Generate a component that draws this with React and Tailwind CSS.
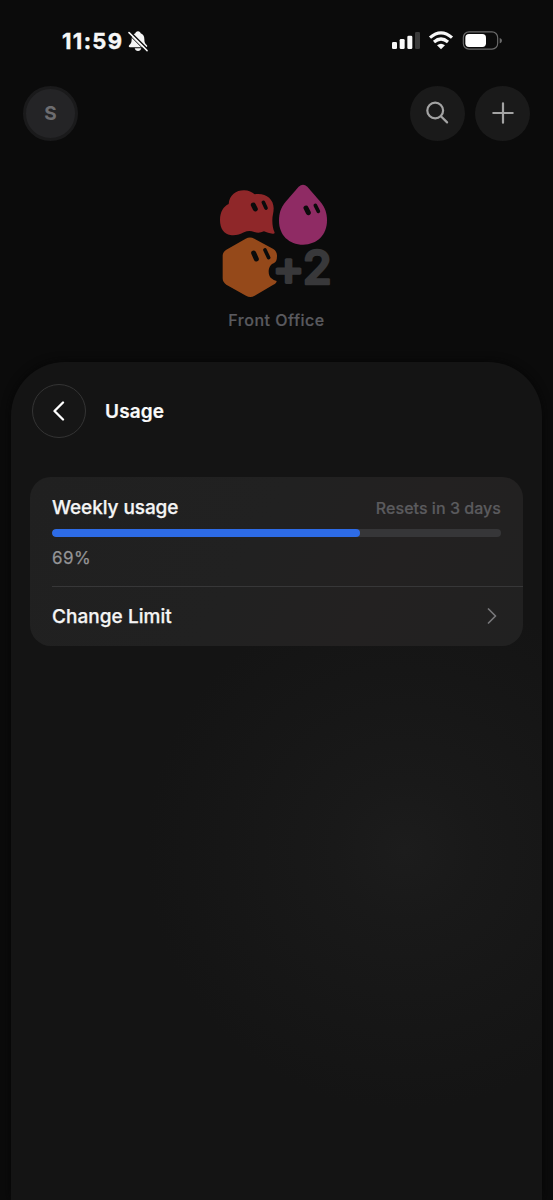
import React from "react";

function BellSlash() {
  return (
    <svg className="h-[22px] w-[22px]" viewBox="0 0 66 66" fill="none">
      <path d="M33 4c-5 0-7 3-8 6-8 3-11 9-11 17 0 10-2 14-7 18-3 3-2 7 2 7h48c4 0 5-4 2-7-5-4-7-8-7-18 0-8-3-14-11-17-1-3-3-6-8-6Z" fill="#f5f5f5" />
      <path d="M23 55h20c-1 5-5 8-10 8s-9-3-10-8Z" fill="#f5f5f5" />
      <path d="M9 5 63 59" stroke="#0b0b0b" strokeWidth="5" />
      <path d="M6 8 60 62" stroke="#f5f5f5" strokeWidth="5" strokeLinecap="round" />
      <path d="M3 11 57 65" stroke="#0b0b0b" strokeWidth="3" />
    </svg>
  );
}

function StatusBar() {
  return (
    <div className="flex h-[82px] items-start justify-between pl-[62px] pr-[50px] pt-[27px]">
      <div className="flex h-7 items-center">
        <span className="w-[65px] whitespace-nowrap text-[22px] font-bold leading-7 tracking-[1.35px] text-[#f7f7f7] [-webkit-text-stroke:0.4px_#f7f7f7]">11:59</span>
        <BellSlash />
      </div>
      <svg className="h-7 w-[111px]" viewBox="36 21 333 84" fill="none">
        <g fill="#f8f8f8">
          <rect x="36" y="66" width="15" height="21" rx="4" />
          <rect x="59" y="57" width="15" height="30" rx="4" />
          <rect x="82" y="47" width="15" height="40" rx="4" />
        </g>
        <rect x="105" y="36" width="15" height="51" rx="4" fill="#3a3a3a" />
        <g stroke="#f8f8f8" strokeWidth="9.5">
          <path d="M150 53q33-29 66 0" />
          <path d="M162 66q21-18 42 0" />
        </g>
        <path d="M171 76q12-10 24 0l-12 12Z" fill="#f8f8f8" />
        <rect x="250" y="35.500" width="103" height="52" rx="17" stroke="#6b6b6b" strokeWidth="3.500" />
        <rect x="256" y="42" width="62" height="39" rx="11" fill="#fff" />
        <path d="M359 54c9 2 9 14 0 16Z" fill="#6b6b6b" />
      </svg>
    </div>
  );
}

function TopActions() {
  return (
    <div className="flex h-[62px] items-center justify-between pl-[23px] pr-[23px]">
      <div className="flex size-[55px] items-center justify-center rounded-full border-[3px] border-[#1a1a1b] bg-[#242426] pt-[2px] text-[19px] font-bold text-[#6d6d70]">S</div>
      <div className="flex gap-[10px]">
        <button className="flex size-[55px] items-center justify-center rounded-full bg-[#1a1a1a]">
          <svg className="size-6" viewBox="0 0 24 24" fill="none" stroke="#a3a3a3" strokeWidth="2.2" strokeLinecap="round">
            <circle cx="9.200" cy="9.500" r="7.900" />
            <path d="m14.900 15.200 6.200 6.200" />
          </svg>
        </button>
        <button className="flex size-[55px] items-center justify-center rounded-full bg-[#1a1a1a]">
          <svg className="size-6" viewBox="0 0 24 24" fill="none" stroke="#a3a3a3" strokeWidth="2.200" strokeLinecap="round">
            <path d="M2.300 12h19.400M12 2.300v19.400" />
          </svg>
        </button>
      </div>
    </div>
  );
}

function Group() {
  return (
    <div className="flex h-[218px] flex-col items-center pt-8">
      <svg className="mr-[3px] h-[130px] w-[130px]" viewBox="0 0 390 390">
        <path d="M56 84C58 57 78 43 102 43C116 43 126 48 134 55C163 49 191 66 191 97C191 111 187 119 187 133C187 148 189 159 193 167Q196 174 188 173C178 172 170 169 162 166C151 171 142 171 133 168C121 163 112 164 102 169C89 176 75 179 61 177C43 175 30 158 30 132C30 108 40 92 56 84Z" fill="#8f2729" />
        <path d="M266 32Q279 20 292 32L331 77C346 95 351 113 351 133C351 177 321 206 279 206C237 206 207 177 207 134C207 112 212 95 227 77Z" fill="#8f2b64" />
        <path d="M107 188Q120 181 133 188L190 219Q201 226 201 240Q201 258 191 262C173 268 172 298 184 307Q193 315 200 315Q200 322 190 326L134 359Q121 367 108 359L49 326Q38 319 38 307V239Q38 228 49 221Z" fill="#95491a" />
        <g stroke="#0b0b0b" strokeLinecap="round" fill="none">
          <g strokeWidth="15">
            <path d="m130 87 6 12" />
            <path d="m288 96 7 14" />
            <path d="m131 231 8 18" />
          </g>
          <g strokeWidth="11">
            <path d="m160 79 8 17" />
            <path d="m316 88 9 18" />
            <path d="m165 222 11 23" />
          </g>
        </g>
        <g fill="#38383a" stroke="#38383a" strokeLinejoin="round" fontFamily="Inter, sans-serif" fontWeight="500">
          <text x="188" y="327" fontSize="142" strokeWidth="9">+</text>
          <text x="278" y="325" fontSize="141" strokeWidth="8">2</text>
        </g>
      </svg>
      <div className="mt-[3px] whitespace-nowrap text-[16px] font-medium leading-[22px] tracking-[0.5px] text-[#5a5a5f] [-webkit-text-stroke:0.2px_#5a5a5f]">Front Office</div>
    </div>
  );
}

function UsageCard() {
  return (
    <section className="mx-[19px] mt-[39px] h-[169px] rounded-[21px] bg-[linear-gradient(120deg,#202020,#212121_45%,#232121_70%,#212121)] pl-[22px]">
      <div className="h-[109px] pr-[22px] pt-[19px]">
        <div className="flex h-6 items-center justify-between whitespace-nowrap">
          <h2 className="text-[19px] font-medium tracking-[-0.08px] text-[#f5f5f5] [-webkit-text-stroke:0.25px_#f5f5f5]">Weekly usage</h2>
          <span className="text-[16px] font-medium tracking-[0.04px] text-[#5b5b5e] [-webkit-text-stroke:0.2px_#5b5b5e]">Resets in 3 days</span>
        </div>
        <div className="mt-[9px] h-[8px] overflow-hidden rounded-full bg-[#363638]">
          <div className="h-full w-[308px] rounded-full bg-[#2d6be6]" />
        </div>
        <div className="mt-[9px] text-[17px] leading-6 tracking-[0.4px] text-[#949496] [-webkit-text-stroke:0.25px_#949496]">69%</div>
      </div>
      <button className="flex h-[60px] w-full items-center justify-between border-t border-[#373738] pr-[26px]">
        <span className="whitespace-nowrap pt-px text-[19px] font-medium tracking-[0.05px] text-[#f5f5f5] [-webkit-text-stroke:0.25px_#f5f5f5]">Change Limit</span>
        <svg className="mb-[2px] h-4 w-[10px]" viewBox="0 0 10 16" fill="none" stroke="#77777a" strokeWidth="1.700" strokeLinecap="round" strokeLinejoin="round">
          <path d="m1.500 1 7 7-7 7" />
        </svg>
      </button>
    </section>
  );
}

export default function App() {
  return (
    <main className="flex h-[1200px] w-[553px] flex-col overflow-hidden bg-[#0b0b0b] font-['Inter',sans-serif]">
      <StatusBar />
      <TopActions />
      <Group />
      <div className="mx-[11px] flex-1 rounded-t-[54px] bg-[#141414] bg-[radial-gradient(circle_at_394px_488px,#1c1c1c_0px,#191919_70px,#161616_180px,#141414_260px)] shadow-[0_0_10px_#060606]">
        <header className="flex h-[76px] items-end pl-[21px]">
          <button className="flex size-[54px] items-center justify-center rounded-full border border-[#343434] bg-[#161616]">
            <svg className="h-[20px] w-3" viewBox="0 0 12 20" fill="none" stroke="#fff" strokeWidth="2.300" strokeLinecap="round" strokeLinejoin="round">
              <path d="M10 1.500 1.500 10l8.500 8.500" />
            </svg>
          </button>
          <h1 className="ml-[19px] pb-[12px] text-[19px] font-semibold leading-7 tracking-[0.15px] text-[#fafafa] [-webkit-text-stroke:0.2px_#fafafa]">Usage</h1>
        </header>
        <UsageCard />
      </div>
    </main>
  );
}
